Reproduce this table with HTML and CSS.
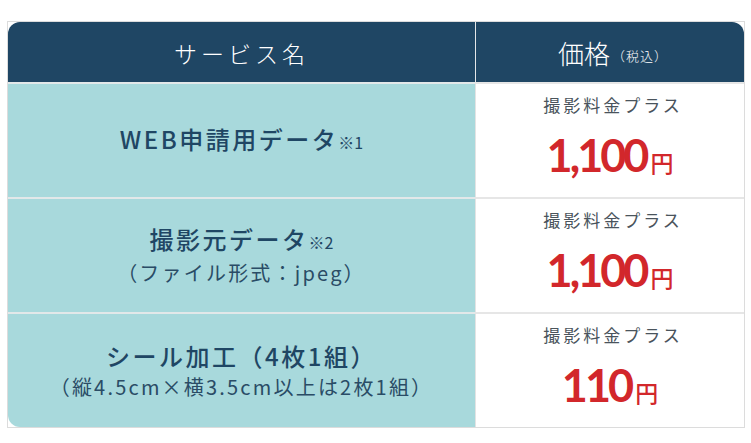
FILE: index.html
```html
<!DOCTYPE html>
<html lang="ja">
<head>
<meta charset="utf-8">
<link rel="stylesheet" href="styles.css">
</head>
<body>
<div class="wrap">
  <div class="table">
    <div class="head head-left">サービス名</div>
    <div class="head head-right">価格<span class="tax">（税込）</span></div>

    <div class="name">
      <div class="title">WEB申請用データ<span class="note">※1</span></div>
    </div>
    <div class="price">
      <div class="plus">撮影料金プラス</div>
      <div class="amount">1,100<span class="yen">円</span></div>
    </div>

    <div class="name">
      <div class="title">撮影元データ<span class="note">※2</span></div>
      <div class="sub">（ファイル形式：jpeg）</div>
    </div>
    <div class="price">
      <div class="plus">撮影料金プラス</div>
      <div class="amount">1,100<span class="yen">円</span></div>
    </div>

    <div class="name name-last">
      <div class="title">シール加工（4枚1組）</div>
      <div class="sub">（縦4.5cm×横3.5cm以上は2枚1組）</div>
    </div>
    <div class="price">
      <div class="plus">撮影料金プラス</div>
      <div class="amount">110<span class="yen">円</span></div>
    </div>
  </div>
</div>
</body>
</html>
```

FILE: styles.css
```css
html, body {
  margin: 0;
  padding: 0;
  background: #ffffff;
}

body {
  padding: 21px 6px 0 7px;
  font-family: "Noto Sans CJK JP", "Noto Sans", sans-serif;
}

.wrap {
  width: 736px;
  border: 1px solid #dcdcdc;
  background: #ffffff;
}

.table {
  display: grid;
  grid-template-columns: 467px 1fr;
  grid-template-rows: 60px 115px 115px 115px;
}

.head {
  background: #1f4664;
  color: #ffffff;
  display: flex;
  align-items: center;
  justify-content: center;
  font-weight: 300;
}

.head-left {
  border-top-left-radius: 12px;
  font-size: 23px;
  letter-spacing: 4px;
  padding-top: 1px;
}

.head-right {
  border-top-right-radius: 12px;
  border-left: 1px solid #e3e6e8;
  font-size: 26px;
  letter-spacing: 0;
  padding-left: 6px;
}

.tax {
  font-size: 13px;
  letter-spacing: 1px;
  margin-left: 2px;
  margin-top: 6px;
}

.name {
  background: #a8d9dc;
  border-top: 2px solid #e2e8e9;
  color: #1f4664;
  display: flex;
  flex-direction: column;
  align-items: center;
  justify-content: center;
}

.name-last {
  border-bottom-left-radius: 12px;
}

.title {
  font-size: 24px;
  font-weight: 500;
  letter-spacing: 2.5px;
  line-height: 32px;
}

.note {
  font-size: 16px;
  font-weight: 400;
  letter-spacing: 0;
  margin-left: 0;
}

.sub {
  font-size: 20px;
  font-weight: 400;
  letter-spacing: 2.2px;
  line-height: 30px;
  color: #2a4c66;
}

.price {
  background: #ffffff;
  border-top: 2px solid #e6e6e6;
  border-left: 1px solid #e3e3e3;
  display: flex;
  flex-direction: column;
  align-items: center;
  justify-content: flex-start;
  padding-top: 8px;
}

.plus {
  font-size: 17px;
  letter-spacing: 3px;
  color: #4a545c;
  line-height: 26px;
  padding-left: 6px;
}

.amount {
  font-family: "Lato", "Noto Sans", sans-serif;
  font-weight: 700;
  font-size: 45px;
  letter-spacing: -3px;
  color: #d2272b;
  line-height: 50px;
  margin-top: 12px;
}

.yen {
  font-family: "Noto Sans CJK JP", sans-serif;
  font-size: 23px;
  font-weight: 500;
  letter-spacing: 0;
  margin-left: 4px;
}
```
